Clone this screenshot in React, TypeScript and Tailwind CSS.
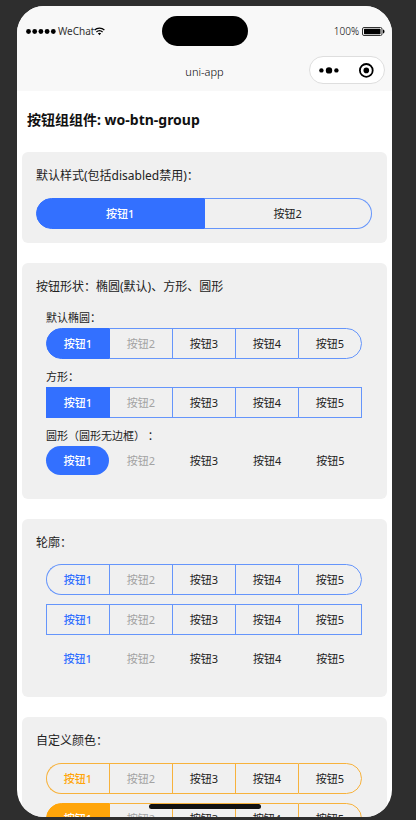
import { clsx } from "clsx";

type Shape = "round" | "square" | "circle";
type Variant = "fill" | "outline";
type Tone = "blue" | "orange";

interface ButtonGroupProps {
  label: string;
  count?: number;
  shape?: Shape;
  variant?: Variant;
  tone?: Tone;
  disabled?: number[];
}

const tones = {
  blue: {
    fill: "bg-[#3370ff] border-[#3370ff]",
    text: "text-[#3370ff]",
    border: "border-[#6595fb]",
  },
  orange: {
    fill: "bg-[#ffa50a] border-[#ffa50a]",
    text: "text-[#ffa50a]",
    border: "border-[#f7b23c]",
  },
};

function ButtonGroup({
  label,
  count = 5,
  shape = "round",
  variant = "fill",
  tone = "blue",
  disabled = [2],
}: ButtonGroupProps) {
  const color = tones[tone];
  const bordered = shape !== "circle";
  return (
    <div
      role="group"
      aria-label={label}
      className={clsx("flex text-[11px]", bordered ? "h-[31px]" : "h-[29px]")}
    >
      {Array.from({ length: count }, (_, i) => i + 1).map((n) => {
        const active = n === 1;
        const filled = active && variant === "fill";
        return (
          <button
            key={n}
            type="button"
            aria-pressed={active}
            disabled={disabled.includes(n)}
            className={clsx(
              "flex-1 pt-0.5 whitespace-nowrap",
              bordered && "border-y",
              bordered && !filled && color.border,
              bordered && (n !== 2 || variant === "outline") && "border-l",
              bordered && (n === count || filled) && "border-r",
              shape === "round" && active && "rounded-l-full",
              shape === "round" && n === count && "rounded-r-full",
              shape === "circle" && "rounded-full",
              active && "font-medium",
              filled && color.fill,
              filled && "text-white",
              active && !filled && color.text,
              !active && "text-[#222222] disabled:text-[#a3a3a3]"
            )}
          >
            按钮{n}
          </button>
        );
      })}
    </div>
  );
}

function Card({ title, children }: { title: string; children: React.ReactNode }) {
  return (
    <section className="rounded-md bg-[#f0f0f0] pt-[15px] pr-[15px] pl-3.5">
      <h2 className="text-xs leading-[18px] text-[#222222]">{title}</h2>
      {children}
    </section>
  );
}

function Labelled({ text, children }: { text: string; children: React.ReactNode }) {
  return (
    <div>
      <p className="pt-0.5 text-[11px] leading-5 text-[#222222]">{text}</p>
      {children}
    </div>
  );
}

function WifiIcon() {
  return (
    <svg viewBox="0 0 11 9" className="h-[9px] w-[11px]" fill="none" stroke="#000" strokeWidth="1.2" aria-hidden="true">
      <path d="M.6 3C3.3.4 7.7.4 10.4 3" />
      <path d="M2.4 5c1.8-1.7 4.4-1.7 6.2 0" />
      <path d="M3.8 6.3c1-.9 2.4-.9 3.4 0L5.5 8.2z" fill="#000" stroke="none" />
    </svg>
  );
}

function BatteryIcon() {
  return (
    <svg viewBox="0 0 23 9" className="h-[9px] w-[23px]" aria-hidden="true">
      <rect x=".5" y=".5" width="19.5" height="8" rx="1.5" fill="none" stroke="#333" />
      <rect x="2" y="1.8" width="16.5" height="5.4" rx=".6" />
      <path d="M21 2.5c2 .4 2 3.6 0 4z" />
    </svg>
  );
}

function Header() {
  return (
    <header className="shrink-0 bg-[#f8f8f8] px-[7px] pt-2.5 pb-[7px] text-black">
      <div className="grid h-[30px] grid-cols-[1fr_auto_1fr] items-center text-[10px]">
        <div className="flex items-center pl-0.5">
          <svg viewBox="0 0 30 5" className="mr-0.5 h-[5px] w-[30px]" aria-hidden="true">
            {[2.5, 8.7, 14.9, 21.1, 27.3].map((x) => (
              <circle key={x} cx={x} cy="2.5" r="2.4" />
            ))}
          </svg>
          <span className="text-[#333333]">WeChat</span>
          <WifiIcon />
        </div>
        <div className="h-full w-[86px] rounded-full bg-black" />
        <div className="flex items-center justify-end gap-[3px]">
          <span className="font-light">100%</span>
          <BatteryIcon />
        </div>
      </div>
      <div className="mt-2.5 grid h-7 grid-cols-[1fr_auto_1fr] items-center">
        <h1 className="col-start-2 pt-1 text-[11px] font-light">uni-app</h1>
        <div className="flex h-7 w-[76px] items-center justify-between justify-self-end rounded-full border border-[#dedede] bg-white">
          <button type="button" aria-label="更多" className="flex h-full flex-1 items-center justify-center">
            <svg viewBox="0 0 20 8" className="h-2 w-5">
              <circle cx="2.4" cy="4.4" r="2.2" />
              <circle cx="10" cy="4.4" r="3.2" />
              <circle cx="17.4" cy="4.4" r="2.2" />
            </svg>
          </button>
          <button type="button" aria-label="关闭" className="flex h-full flex-1 items-center justify-center">
            <svg viewBox="0 0 16 16" className="size-4">
              <circle cx="8.3" cy="8.4" r="6.4" fill="none" stroke="#000" strokeWidth="1.8" />
              <circle cx="8.3" cy="8.4" r="2.8" />
            </svg>
          </button>
        </div>
      </div>
    </header>
  );
}

export default function App() {
  return (
    <div
      lang="zh-CN"
      className="h-screen bg-[#2e2e2e] pt-1.5 pr-6 pb-[3px] pl-[17px] font-['Noto_Sans','Noto_Sans_CJK_SC',sans-serif]"
    >
      <div className="relative flex h-full flex-col overflow-hidden rounded-[27px] bg-white">
        <Header />
        <main className="min-h-0 flex-1 overflow-hidden px-[5px]">
          <h2 className="px-[5px] pt-[19px] pb-[22px] text-sm leading-5 font-bold text-[#111111]">
            按钮组组件: wo-btn-group
          </h2>
          <div className="flex flex-col gap-5">
            <Card title="默认样式(包括disabled禁用)：">
              <div className="pt-[13px] pb-3.5">
                <ButtonGroup label="默认样式" count={2} disabled={[]} />
              </div>
            </Card>
            <Card title="按钮形状：椭圆(默认)、方形、圆形">
              <div className="flex flex-col gap-1.5 px-2.5 pt-2.5 pb-6">
                <Labelled text="默认椭圆：">
                  <ButtonGroup label="默认椭圆" />
                </Labelled>
                <Labelled text="方形：">
                  <ButtonGroup label="方形" shape="square" />
                </Labelled>
                <Labelled text="圆形（圆形无边框） ：">
                  <ButtonGroup label="圆形" shape="circle" />
                </Labelled>
              </div>
            </Card>
            <Card title="轮廓：">
              <div className="flex flex-col gap-[9px] px-2.5 pt-3 pb-6">
                <ButtonGroup label="轮廓椭圆" variant="outline" />
                <ButtonGroup label="轮廓方形" variant="outline" shape="square" />
                <ButtonGroup label="轮廓圆形" variant="outline" shape="circle" />
              </div>
            </Card>
            <Card title="自定义颜色：">
              <div className="flex flex-col gap-[9px] px-2.5 pt-[13px] pb-6">
                <ButtonGroup label="自定义轮廓" variant="outline" tone="orange" />
                <ButtonGroup label="自定义填充" tone="orange" />
              </div>
            </Card>
          </div>
        </main>
        <div className="absolute bottom-2 left-1/2 h-[5px] w-28 -translate-x-1/2 rounded-full bg-[#111111]" />
      </div>
    </div>
  );
}
